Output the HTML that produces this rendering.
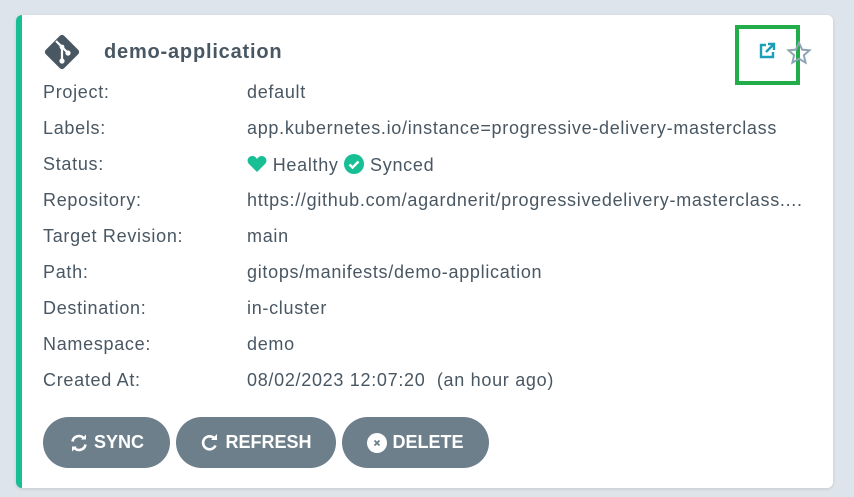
<!DOCTYPE html>
<html><head><style>
body{margin:0;width:854px;height:497px;background:#dee4eb;font-family:"Liberation Sans",sans-serif;position:relative;overflow:hidden}
.card{position:absolute;left:16px;top:15px;width:817px;height:473px;background:#fff;border-radius:6px;border-left:6px solid #18be94;box-sizing:border-box;box-shadow:0 1px 3px rgba(0,0,0,.12)}
.row{position:absolute;left:43px;font-size:18px;color:#495763;line-height:20px;letter-spacing:0.7px}
.row span{position:absolute;left:204px;white-space:nowrap}
.title{position:absolute;left:104px;top:41px;font-size:20px;font-weight:bold;color:#495763;letter-spacing:0.8px}
.btn{position:absolute;top:417px;height:51px;border-radius:26px;background:#6d7f8b;color:#fff;font-weight:bold;font-size:18px;display:flex;align-items:center;justify-content:center;gap:5px}
</style></head><body>
<div class="card"></div>
<svg style="position:absolute;left:43px;top:33px" width="38" height="38" viewBox="0 0 38 38">
<rect x="6" y="6" width="26" height="26" rx="3" transform="rotate(45 19 19)" fill="#495763"/>
<g stroke="#fff" stroke-width="2.2" fill="none"><path d="M13 8 L19 14 L19 27"/><path d="M19 14 L25 20"/></g>
<circle cx="19" cy="28" r="2.6" fill="#fff"/><circle cx="19" cy="14" r="2.4" fill="#fff"/><circle cx="25" cy="20" r="2.6" fill="#fff"/>
</svg>
<div class="title">demo-application</div>
<div style="position:absolute;left:735px;top:25px;width:65px;height:60px;border:4px solid #22ad4b;box-sizing:border-box"></div>
<svg style="position:absolute;left:758px;top:42px" width="18" height="18" viewBox="0 0 18 18"><path d="M8 3H3v12h12v-5" stroke="#1a9fb8" stroke-width="2.4" fill="none"/><path d="M8 10L15 3M10 2h6v6" stroke="#1a9fb8" stroke-width="2.4" fill="none"/></svg>
<svg style="position:absolute;left:786px;top:40px" width="26" height="26" viewBox="0 0 24 24"><path d="M12 2.5l2.9 6.4 6.8.6-5.2 4.6 1.6 6.8L12 17.3 5.9 20.9l1.6-6.8L2.3 9.5l6.8-.6z" fill="none" stroke="#8ea3b4" stroke-width="1.8"/></svg>
<div class="row" style="top:82px">Project:<span>default</span></div>
<div class="row" style="top:118px">Labels:<span>app.kubernetes.io/instance=progressive-delivery-masterclass</span></div>
<div class="row" style="top:154px">Status:<span><svg width="20" height="18" viewBox="0 0 20 18" style="vertical-align:-2px"><path d="M10 17L2 9C-1 6 1 1 5.5 1 7.5 1 9 2.5 10 4 11 2.5 12.5 1 14.5 1 19 1 21 6 18 9z" fill="#18be94"/></svg> Healthy <svg width="20" height="20" viewBox="0 0 20 20" style="vertical-align:-3px"><circle cx="10" cy="10" r="10" fill="#18be94"/><path d="M5.5 10.5l3 3 6-6" stroke="#fff" stroke-width="2.4" fill="none"/></svg> Synced</span></div>
<div class="row" style="top:190px">Repository:<span>https://github.com/agardnerit/progressivedelivery-masterclass....</span></div>
<div class="row" style="top:226px">Target Revision:<span>main</span></div>
<div class="row" style="top:262px">Path:<span>gitops/manifests/demo-application</span></div>
<div class="row" style="top:298px">Destination:<span>in-cluster</span></div>
<div class="row" style="top:334px">Namespace:<span>demo</span></div>
<div class="row" style="top:370px">Created At:<span>08/02/2023 12:07:20&nbsp; (an hour ago)</span></div>
<div class="btn" style="left:43px;width:127px"><svg width="20" height="20" viewBox="0 0 20 20"><path d="M3.5 8.5A6.5 6.5 0 0 1 15 5.5M16.5 11.5A6.5 6.5 0 0 1 5 14.5" stroke="#fff" stroke-width="2.6" fill="none"/><path d="M12 6.5h5v-5z M8 13.5H3v5z" fill="#fff"/></svg>SYNC</div>
<div class="btn" style="left:176px;width:160px"><svg width="20" height="20" viewBox="0 0 20 20"><path d="M15.5 12.5A6.5 6.5 0 1 1 14 5" stroke="#fff" stroke-width="2.6" fill="none"/><path d="M11 7h6V1z" fill="#fff"/></svg>REFRESH</div>
<div class="btn" style="left:342px;width:147px"><svg width="20" height="20" viewBox="0 0 20 20"><circle cx="10" cy="10" r="10" fill="#fff"/><path d="M7.5 7.5l5 5M12.5 7.5l-5 5" stroke="#6d7f8b" stroke-width="1.8"/></svg>DELETE</div>
</body></html>
